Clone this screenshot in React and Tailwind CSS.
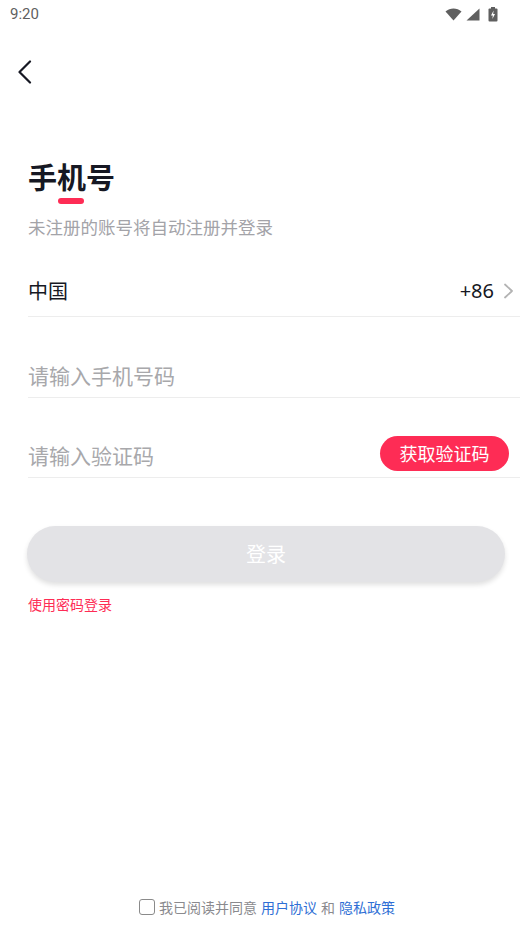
import React, { useState } from 'react';

const StatusBar = () => (
    <div className="h-7 flex items-center justify-between pl-[10px] pr-[34px] text-[#5f5f5f]">
        <span className="text-[15px] font-['Roboto',sans-serif]">9:20</span>
        <div className="flex items-center gap-[4px]">
            {/* wifi */}
            <svg width="17" height="13" viewBox="0 0 17 13">
                <path d="M0.5 3.6 C5 -0.6 12 -0.6 16.5 3.6 L8.5 12.5 Z" fill="#5f5f5f" />
            </svg>
            {/* cellular */}
            <svg width="14" height="13" viewBox="0 0 14 13">
                <path d="M13.5 0.5 L13.5 12.5 L0.5 12.5 Z" fill="#5f5f5f" />
            </svg>
            {/* battery */}
            <svg width="10" height="15" viewBox="0 0 10 15" className="ml-[4px]">
                <rect x="3" y="0" width="4" height="2" fill="#5f5f5f" />
                <rect x="0.5" y="1.5" width="9" height="13" rx="1" fill="#5f5f5f" />
                <path d="M5.6 3.5 L3 8.5 L4.8 8.5 L4.4 12 L7 7 L5.2 7 Z" fill="#fff" />
            </svg>
        </div>
    </div>
);

const App = () => {
    const [agreed, setAgreed] = useState(false);

    return (
        <div className="min-h-[946px] bg-white flex flex-col font-['Noto_Sans_CJK_SC','Noto_Sans',sans-serif]">
            <StatusBar />

            {/* 返回 */}
            <div className="h-[88px] flex items-start pt-[32px] pl-[17px]">
                <svg width="15" height="24" viewBox="0 0 15 24">
                    <polyline points="13,1.5 2.5,12 13,22.5" fill="none" stroke="#161823" strokeWidth="2.2" strokeLinecap="round" strokeLinejoin="round" />
                </svg>
            </div>

            <div className="pl-7 pr-3 flex flex-col">
                {/* 标题 */}
                <h1 className="mt-[40px] h-[40px] flex items-center text-[29px] font-bold text-[#161823] leading-none">
                    手机号
                </h1>
                <div className="ml-[30px] mt-[2px] w-[26px] h-[6px] rounded-full bg-[#fe2c55]" />
                <p className="mt-[11px] text-[17.5px] leading-[24px] text-[#a3a3a8]">未注册的账号将自动注册并登录</p>

                {/* 国家/地区 */}
                <div className="mt-[26px] h-[52px] flex items-center justify-between border-b border-[#ededed]">
                    <span className="text-[20px] text-[#161823]">中国</span>
                    <div className="flex items-center gap-[9px] pr-[6px]">
                        <span className="text-[20px] text-[#161823] font-['Noto_Sans',sans-serif]">+86</span>
                        <svg width="11" height="16" viewBox="0 0 11 16">
                            <polyline points="2,1.5 9,8 2,14.5" fill="none" stroke="#b3b3b3" strokeWidth="1.8" strokeLinecap="round" strokeLinejoin="round" />
                        </svg>
                    </div>
                </div>

                {/* 手机号 */}
                <div className="mt-[38px] h-[43px] flex items-center border-b border-[#ededed]">
                    <input
                        className="w-full outline-none text-[21px] text-[#161823] placeholder:text-[#a8a8ab] bg-transparent"
                        placeholder="请输入手机号码"
                    />
                </div>

                {/* 验证码 */}
                <div className="mt-[37px] h-[43px] flex items-center justify-between border-b border-[#ededed]">
                    <input
                        className="flex-1 min-w-0 outline-none text-[21px] text-[#161823] placeholder:text-[#a8a8ab] bg-transparent"
                        placeholder="请输入验证码"
                    />
                    <button className="mb-[5px] mr-[11px] w-[129px] h-[35px] rounded-full bg-[#fe2c55] text-white text-[18px] flex items-center justify-center">
                        获取验证码
                    </button>
                </div>

                {/* 登录 */}
                <button className="mt-[48px] -ml-px mr-[15px] h-[56px] rounded-full bg-[#e3e3e6] text-white text-[20px] shadow-[0_3px_5px_rgba(0,0,0,0.12)]">
                    登录
                </button>
                <span className="mt-[12px] text-[14px] leading-[20px] text-[#fe2c55]">使用密码登录</span>
            </div>

            {/* 协议 */}
            <div className="mt-auto pb-[29px] flex items-center justify-center pl-[2px] text-[14px] leading-[20px]">
                <button
                    onClick={() => setAgreed(!agreed)}
                    className={`w-[16px] h-[16px] rounded-[3px] border-[1.5px] mr-[4px] ${agreed ? 'border-[#fe2c55] bg-[#fe2c55]' : 'border-[#8a8a8a] bg-white'}`}
                />
                <span className="text-[#8a8a8e]">我已阅读并同意</span>
                <span className="text-[#2f6fd5] ml-[4px]">用户协议</span>
                <span className="text-[#8a8a8e] mx-[4px]">和</span>
                <span className="text-[#2f6fd5]">隐私政策</span>
            </div>
        </div>
    );
};

export default App;
